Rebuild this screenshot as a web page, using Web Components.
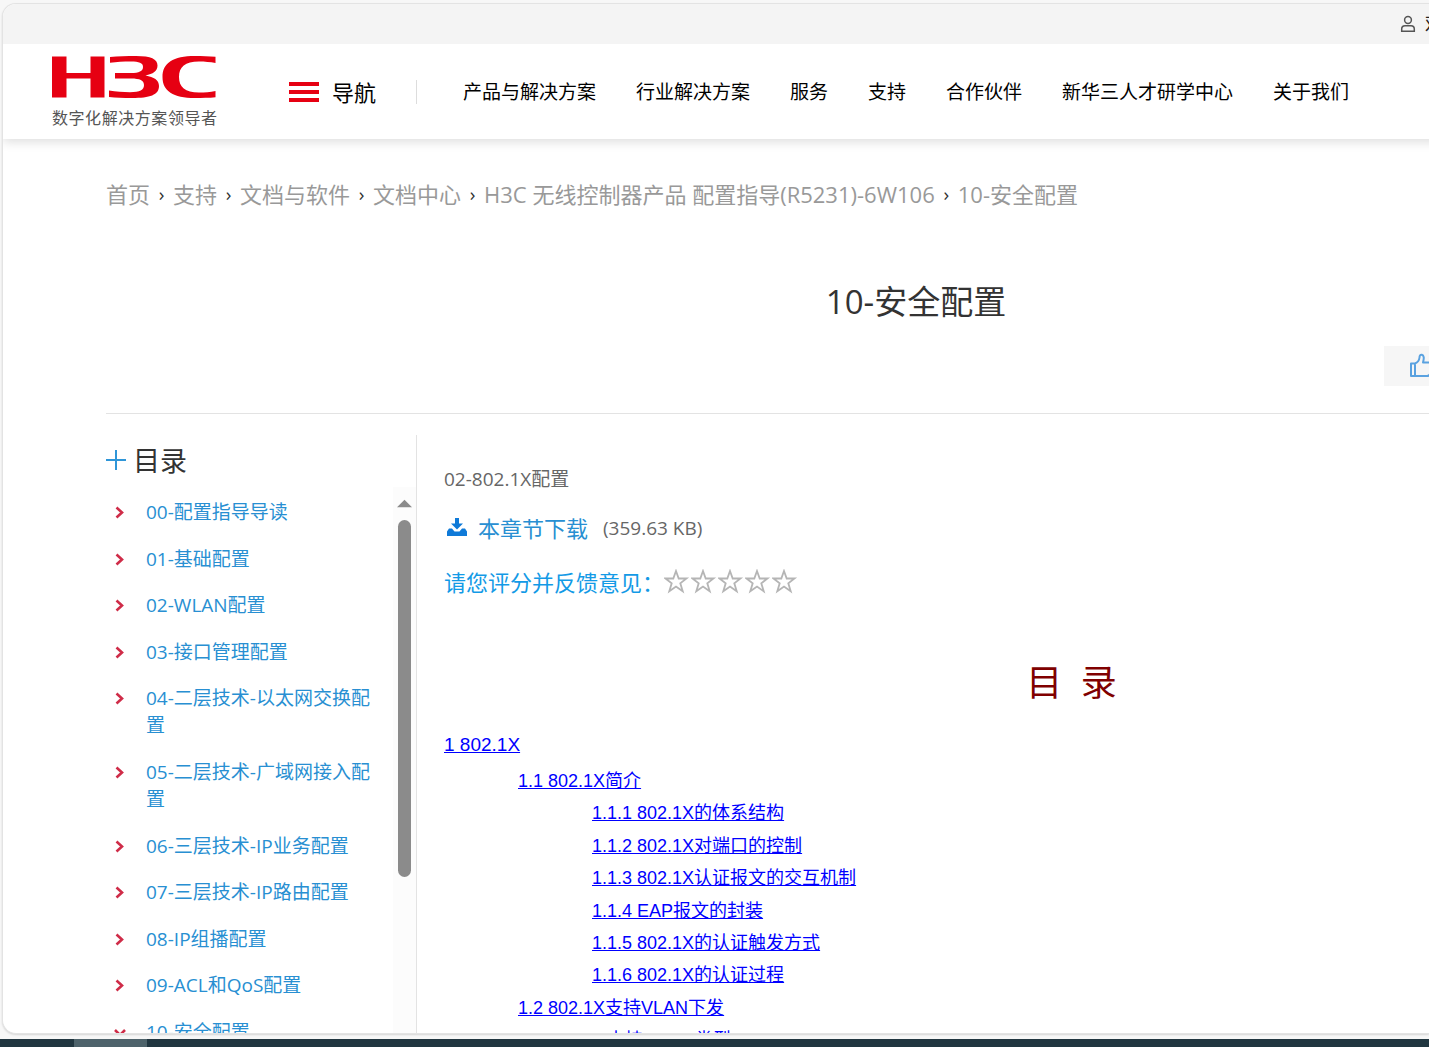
<!DOCTYPE html>
<html lang="zh-CN">
<head>
<meta charset="utf-8">
<title>10-安全配置 - 新华三集团-H3C</title>
<style>
html, body { margin: 0; height: 100%; overflow: hidden; }
body { font-family: "Open Sans", "Noto Sans CJK SC", sans-serif; color: #333; background: #f7f7f7; }
</style>
</head>
<body>
<desktop-shell>
  <browser-window>
    <top-bar></top-bar>
    <site-header></site-header>
    <doc-page>
      <bread-crumb></bread-crumb>
      <doc-title>10-安全配置</doc-title>
      <doc-columns>
        <side-toc slot="side"></side-toc>
        <chapter-info></chapter-info>
        <chapter-toc></chapter-toc>
      </doc-columns>
    </doc-page>
  </browser-window>
</desktop-shell>
<script>
function define(name, html) {
  const template = document.createElement('template');
  template.innerHTML = html;
  customElements.define(name, class extends HTMLElement {
    constructor() {
      super();
      this.attachShadow({ mode: 'open' }).appendChild(template.content.cloneNode(true));
    }
  });
}

define('desktop-shell', `
<style>
:host { display: flex; flex-direction: column; height: 100vh; box-sizing: border-box; }
main { flex: 1; min-height: 0; padding: 3px 0 5px 2px; display: flex; }
::slotted(*) { flex: 1; min-width: 0; }
.bar { height: 8px; background: #213640; padding-left: 74px; }
.bar div { width: 73px; height: 8px; background: #4e636b; }
</style>
<main><slot></slot></main>
<div class="bar"><div></div></div>`);

define('browser-window', `
<style>
:host { display: flex; flex-direction: column; overflow: hidden; background: #fff; border: 1px solid #e3e3e3; border-right: 0; border-radius: 14px 0 0 14px; box-shadow: 0 1px 2px #0002; }
</style>
<slot></slot>`);

define('top-bar', `
<style>
:host { display: flex; flex: none; justify-content: flex-end; position: relative; z-index: 1; align-items: center; height: 40px; background: #f4f4f4; overflow: hidden; }
a { display: flex; align-items: center; gap: 9px; margin-right: -15px; font-size: 19px; line-height: 26px; color: #222; text-decoration: none; }
</style>
<a href="#"><svg width="16" height="18" viewBox="0 0 16 18" fill="none" stroke="#555" stroke-width="1.5"><circle cx="8" cy="5" r="3.4"/><path d="M1.7 16.2V14.2Q1.7 10.8 5 10.8H11Q14.3 10.8 14.3 14.2V16.2Z"/></svg>欢</a>`);

define('h3c-logo', `
<style>
:host { display: block; width: 165px; }
svg { display: block; }
p { margin: 9px 0 0; font-size: 16px; line-height: 22px; color: #555; text-align: justify; text-align-last: justify; }
</style>
<svg width="165" height="42" viewBox="0 0 165 42" fill="#e60012" role="img" aria-label="H3C">
<path d="M0 0.5H14.5V17H38.5V0.5H52.500V41.500H38.500V22.500H14.500V41.500H0Z"/>
<path d="M58 1C66 .2 75 0 84 0C99 0 105.500 3 105.500 9.500C105.500 15 101 18 93.500 19.500C102 21 107 24 107 30C107 39 98 42 80 42C71 42 64 41.600 57 41V34.500C64 35.600 71 36.200 78 36.200C88 36.200 92 34 92 29C92 24.500 88 22.500 79 22.500H63V17H79C87 17 91 15 91 11C91 7 87 5.600 79 5.600C71 5.600 65 6 58 6.800Z"/>
<path d="M163.500 0.800V7C158 6 153 5.500 147 5.500C133 5.500 127 11 127 21C127 31 133 36.500 147 36.500C153 36.500 158 36 163.500 35V41.200C157 41.800 150 42 143 42C121 42 110.500 35 110.500 21C110.500 7 121 0 143 0C150 0 157 .2 163.500 .8Z"/>
</svg>
<p>数字化解决方案领导者</p>`);

define('site-header', `
<style>
:host { display: flex; flex: none; position: relative; align-items: center; height: 95px; padding-left: 49px; margin-right: -20px; background: #fff; box-shadow: 0 3px 10px #0002; box-sizing: border-box; white-space: nowrap; color: #000; }
h3c-logo { padding-top: 2px; }
button { display: flex; align-items: center; gap: 13px; margin-left: 72px; padding: 0; border: 0; background: none; font: 22px/32px "Open Sans", "Noto Sans CJK SC", sans-serif; color: #000; }
i { width: 1px; height: 24px; background: #ddd; margin: 0 46px 0 40px; }
nav { display: flex; gap: 40px; }
a { font-size: 19px; line-height: 28px; color: #000; text-decoration: none; }
</style>
<h3c-logo></h3c-logo>
<button><svg width="30" height="20" viewBox="0 0 30 20" fill="#e60012"><path d="M0 0H30V4H0ZM0 8H30V12H0ZM0 16H30V20H0Z"/></svg>导航</button>
<i></i>
<nav><a href="#">产品与解决方案</a><a href="#">行业解决方案</a><a href="#">服务</a><a href="#">支持</a><a href="#">合作伙伴</a><a href="#">新华三人才研学中心</a><a href="#">关于我们</a></nav>`);

define('doc-page', `
<style>
:host { display: flex; flex-direction: column; flex: 1; min-height: 0; margin: 0 -297px 0 103px; }
</style>
<slot></slot>`);

define('bread-crumb', `
<style>
:host { display: block; padding-top: 39px; }
ol { display: flex; margin: 0; padding: 0; list-style: none; white-space: nowrap; }
li { display: flex; font-size: 22px; line-height: 32px; }
li + li::before { content: "›"; width: 23px; text-align: center; font-size: 19px; color: #333; }
a { color: #999; text-decoration: none; }
</style>
<ol><li><a href="#">首页</a></li><li><a href="#">支持</a></li><li><a href="#">文档与软件</a></li><li><a href="#">文档中心</a></li><li><a href="#">H3C 无线控制器产品 配置指导(R5231)-6W106</a></li><li><a href="#">10-安全配置</a></li></ol>`);

define('doc-title', `
<style>
:host { display: block; padding: 68px 0 27px; border-bottom: 1px solid #e3e3e3; }
h1 { margin: 0 0 20px; font-size: 33px; font-weight: 400; line-height: 48px; text-align: center; }
div { display: flex; justify-content: flex-end; }
button { width: 342px; height: 40px; padding: 0 25px; border: 0; background: #f6f6f6; text-align: left; }
svg { display: block; }
</style>
<h1><slot></slot></h1>
<div><button aria-label="点赞"><svg width="27" height="26" viewBox="0 0 27 26" fill="none" stroke="#5aa2e0" stroke-width="2" stroke-linejoin="round"><path d="M2 10.500H6V23H2ZM6 10.500Q10 9 10.500 4.500Q10.500 1.500 12.800 1.700Q16 2.500 14 9.500H21.500Q24 10 23 13L21 21Q20.500 23 18 23H6"/></svg></button></div>`);

define('doc-columns', `
<style>
:host { display: flex; flex: 1; min-height: 0; padding-top: 21px; }
aside { display: flex; flex: none; width: 310px; border-right: 1px solid #e3e3e3; }
section { flex: 1; min-width: 0; padding: 29px 27px 0; overflow: hidden; }
::slotted(side-toc) { flex: 1; min-width: 0; }
</style>
<aside><slot name="side"></slot></aside>
<section><slot></slot></section>`);

define('side-toc', `
<style>
:host { display: flex; flex-direction: column; overflow: hidden; }
h2 { display: flex; align-items: center; gap: 7px; flex: none; margin: 0; height: 52px; font-size: 27px; font-weight: 400; line-height: 40px; }
.scroll { display: flex; flex: 1; min-height: 0; }
ul { display: flex; flex-direction: column; justify-content: space-between; flex: 1; height: 547px; margin: 0; padding: 12px 5px 0 7px; list-style: none; }
li { display: flex; gap: 19px; line-height: 27px; font-size: 19px; }
li svg { flex: none; margin-top: 6px; }
a { color: #288fd2; text-decoration: none; }
.track { display: flex; flex-direction: column; align-items: center; gap: 12px; width: 23px; padding-top: 12px; background: #fcfcfc; }
.thumb { width: 13px; height: 357px; border-radius: 7px; background: #8b8b8b; }
h2 svg { margin-bottom: 2px; }
</style>
<h2><svg width="20" height="20" viewBox="0 0 20 20" stroke="#2f96d8" stroke-width="2"><path d="M0 10H20M10 0V20"/></svg>目录</h2>
<div class="scroll"><ul></ul>
<div class="track"><svg width="15" height="9" viewBox="0 0 16 9" fill="#8b8b8b"><path d="M0 8.500L8 0.500L16 8.500Z"/></svg><div class="thumb"></div></div></div>`);

const sections = ['00-配置指导导读', '01-基础配置', '02-WLAN配置', '03-接口管理配置', '04-二层技术-以太网交换配置', '05-二层技术-广域网接入配置', '06-三层技术-IP业务配置', '07-三层技术-IP路由配置', '08-IP组播配置', '09-ACL和QoS配置', '10-安全配置'];
document.querySelector('side-toc').shadowRoot.querySelector('ul').innerHTML = sections.map((text, i) => {
  const d = i === 10 ? 'M2 5L7 10L12 5' : 'M3.500 2.500L9 7.500L3.500 12.500';
  return '<li><svg width="14" height="15" viewBox="0 0 14 15" fill="none" stroke="#cf2c48" stroke-width="2.600"><path d="' + d + '"/></svg><a href="#">' + text + '</a></li>';
}).join('');

define('star-rating', `
<style>
:host { display: flex; gap: 1px; }
button { padding: 0; border: 0; background: none; width: 26px; height: 26px; }
svg { display: block; }
</style>`);

define('chapter-info', `
<style>
:host { display: block; color: #666; }
p { margin: 0; font-size: 19px; line-height: 30px; }
div { display: flex; align-items: center; height: 54px; font-size: 22px; line-height: 32px; }
.download { margin-top: 7px; }
.download a { display: flex; align-items: center; gap: 10px; color: #288fd2; text-decoration: none; margin: 0 15px 0 2px; }
.download span { font-size: 19px; }
.rate { color: #139ae6; }
</style>
<p>02-802.1X配置</p>
<div class="download"><a href="#"><svg width="22" height="20" viewBox="0 0 22 20" fill="#0f7ad8"><path d="M9 0H13V5.500H17L11 11.500L5 5.500H9ZM3 10.500H6L8.500 13.500H13.500L16 10.500H19L21 13.500V18H1V13.500Z"/></svg>本章节下载</a><span>(359.63 KB)</span></div>
<div class="rate">请您评分并反馈意见：<star-rating></star-rating></div>`);

document.querySelector('chapter-info').shadowRoot.querySelector('star-rating').shadowRoot.innerHTML += [1, 2, 3, 4, 5].map(n =>
  '<button aria-label="' + n + '星"><svg width="26" height="26" viewBox="0 0 26 26" fill="none" stroke="#b5b5b5" stroke-width="1.800"><path d="M12 2L14.700 9.500H22.500L16.300 14.300L18.700 22.300L12 17.500L5.300 22.300L7.700 14.300L1.500 9.500H9.300Z"/></svg></button>').join('');

define('chapter-toc', `
<style>
:host { display: block; }
h2 { margin: 51px 0 26px; font-size: 36px; line-height: 46px; font-weight: 400; color: #800000; text-align: center; white-space: pre; }
nav { font: 18px/26px "Liberation Sans", "Noto Sans CJK SC", sans-serif; }
a { color: #00f; text-decoration: underline; }
.top { font-size: 19px; }
.list { display: flex; flex-direction: column; justify-content: space-between; align-items: flex-start; height: 285px; margin: 10px 0 0 74px; }
.deep { margin-left: 74px; }
</style>
<h2>目  录</h2>
<nav><a class="top" href="#">1 802.1X</a>
<div class="list"><a href="#">1.1 802.1X简介</a><a class="deep" href="#">1.1.1 802.1X的体系结构</a><a class="deep" href="#">1.1.2 802.1X对端口的控制</a><a class="deep" href="#">1.1.3 802.1X认证报文的交互机制</a><a class="deep" href="#">1.1.4 EAP报文的封装</a><a class="deep" href="#">1.1.5 802.1X的认证触发方式</a><a class="deep" href="#">1.1.6 802.1X的认证过程</a><a href="#">1.2 802.1X支持VLAN下发</a><a class="deep" href="#">1.支持VLAN 类型</a></div></nav>`);
</script>
</body>
</html>
